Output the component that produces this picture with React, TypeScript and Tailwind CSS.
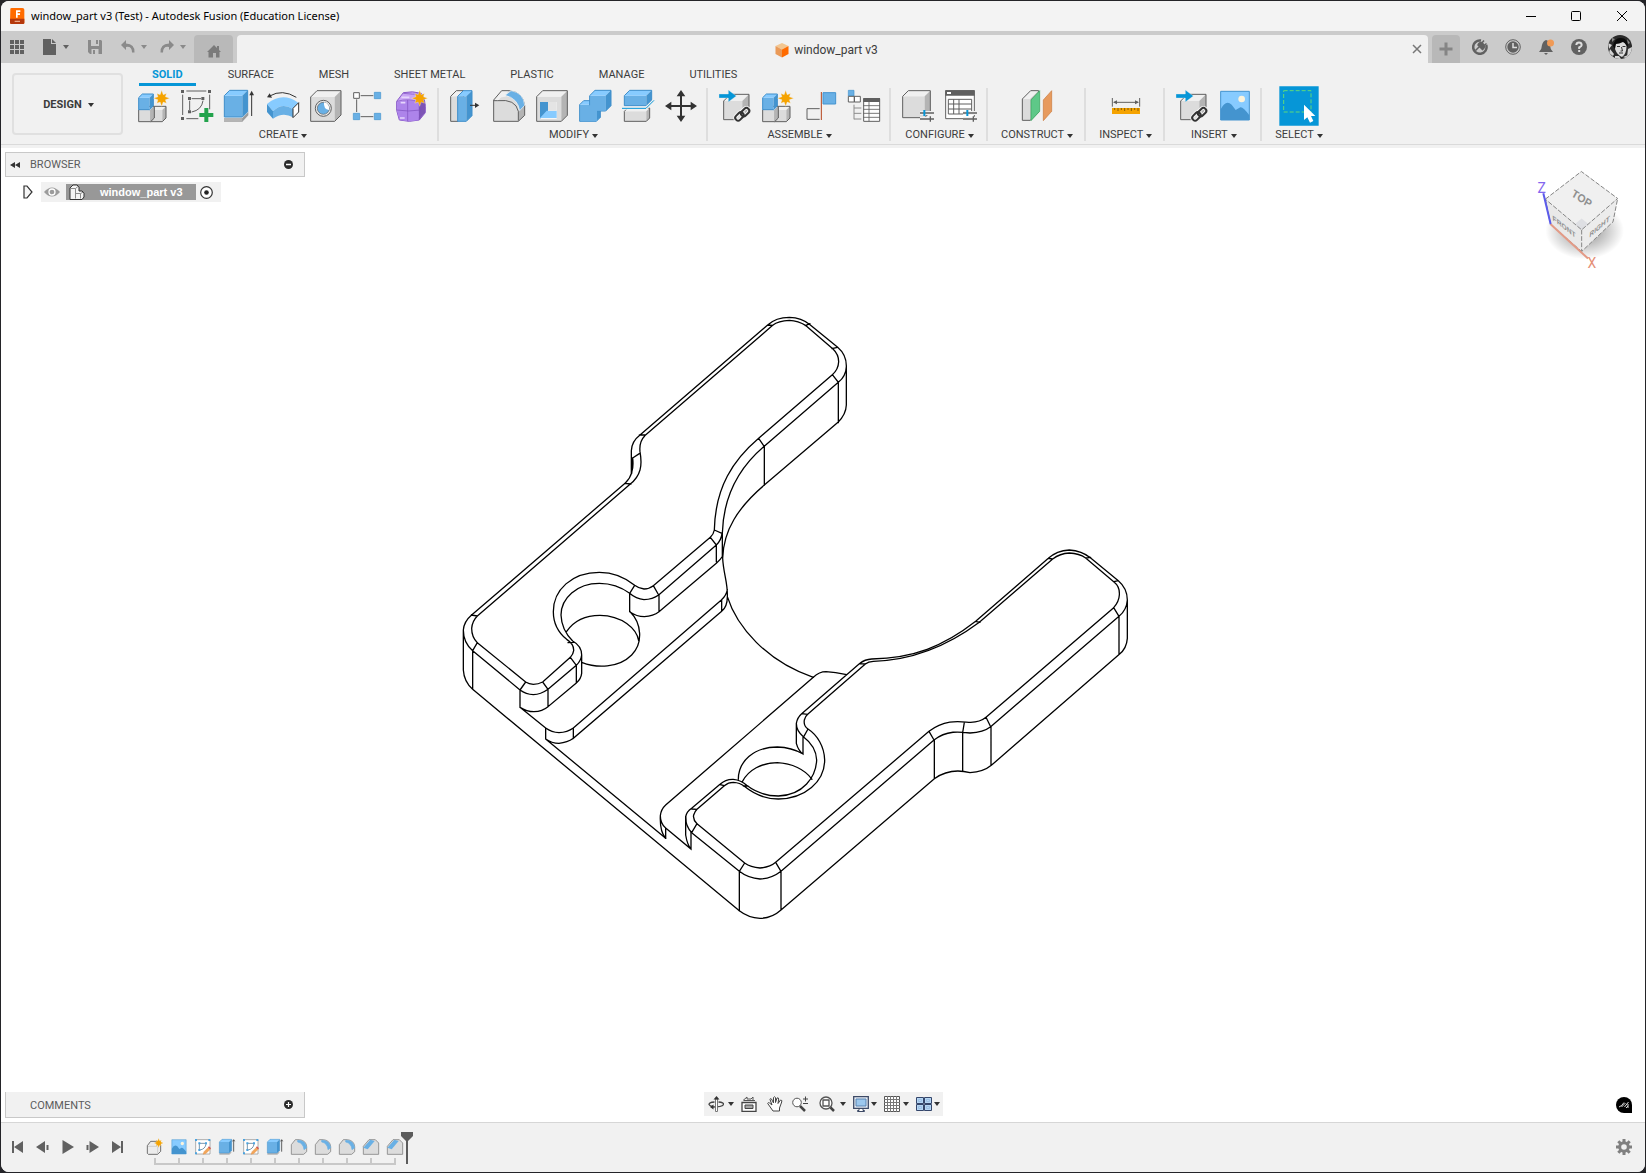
import type { ReactNode } from 'react';

const RIBBON_TABS = ['SOLID', 'SURFACE', 'MESH', 'SHEET METAL', 'PLASTIC', 'MANAGE', 'UTILITIES'];

const GREY = { front: '#dcdcdc', top: '#f0f0f0', side: '#b4b4b4', line: '#5f5f5f' };
const BLUE = { front: '#69b0e5', top: '#87cbff', side: '#4494cf', line: '#3f8fcb' };

// Ribbon artwork is drawn on a 96 unit grid and shown at 32px.
const Art = ({ children, size = 'size-8' }: { children: ReactNode; size?: string }) => (
  <svg viewBox="0 0 96 96" className={`${size} shrink-0 overflow-visible`} fill="none" aria-hidden="true">
    {children}
  </svg>
);

const Box = ({
  x,
  y,
  w,
  h,
  d,
  c = GREY,
}: {
  x: number;
  y: number;
  w: number;
  h: number;
  d: number;
  c?: typeof GREY;
}) => (
  <g stroke={c.line} strokeWidth="3" strokeLinejoin="round">
    <path d={`M${x} ${y + d}h${w}v${h}h${-w}z`} fill={c.front} stroke="none" />
    <path d={`M${x} ${y + d}l${d} ${-d}h${w}l${-d} ${d}z`} fill={c.top} stroke="none" />
    <path d={`M${x + w} ${y + d}l${d} ${-d}v${h}l${-d} ${d}z`} fill={c.side} stroke="none" />
    <path d={`M${x} ${y + d}l${d} ${-d}h${w}v${h}l${-d} ${d}h${-w}z`} />
  </g>
);

const Star = ({ x, y, r = 24 }: { x: number; y: number; r?: number }) => {
  const points = Array.from({ length: 16 }, (_, i) => {
    const radius = i % 2 === 0 ? (i % 4 === 0 ? r : r * 0.85) : r * 0.5;
    const angle = (i * Math.PI) / 8;
    return `${(x + radius * Math.sin(angle)).toFixed(1)},${(y - radius * Math.cos(angle)).toFixed(1)}`;
  }).join(' ');
  return <polygon points={points} fill="#f5a300" stroke="#f1f1f1" strokeWidth="1" />;
};

const ChainLink = () => (
  <g strokeLinecap="round">
    <g stroke="#f1f1f1" strokeWidth="12">
      <rect x="47" y="71" width="28" height="17" rx="8" transform="rotate(-45 61 79)" />
      <rect x="64" y="58" width="28" height="17" rx="8" transform="rotate(-45 78 66)" />
    </g>
    <g stroke="#333" strokeWidth="6">
      <rect x="47" y="71" width="28" height="17" rx="8" transform="rotate(-45 61 79)" />
      <rect x="64" y="58" width="28" height="17" rx="8" transform="rotate(-45 78 66)" />
    </g>
  </g>
);

const Sliders = () => (
  <g>
    <path d="M54 69h42M54 86h42" stroke="#f1f1f1" strokeWidth="12" />
    <path d="M54 69h42M54 87h42" stroke="#5f5f5f" strokeWidth="4" />
    <path d="M67 60v18" stroke="#0696d7" strokeWidth="6" />
    <path d="M85 79v16" stroke="#5f5f5f" strokeWidth="4" />
  </g>
);

const NewComponentArt = () => (
  <Art>
    <Box x={38} y={49} w={35} h={35} d={11} />
    <Box x={2} y={49} w={36} h={35} d={11} />
    <Box x={2} y={12} w={33} h={36} d={11} c={BLUE} />
    <Star x={71} y={25} />
  </Art>
);

const SketchArt = () => (
  <Art>
    <path d="M16 3h60M5 14v61M86 14v44M16 86h36" stroke="#5f5f5f" strokeWidth="3" />
    <path d="M0 0h9v9H0zM81 0h9v9h-9zM0 81h9v9H0zM21 21h9v9h-9zM61 21h9v9h-9zM21 61h9v9h-9z" fill="#5f5f5f" />
    <path d="M32 26h28M26 32v28M66 32Q62 60 32 66" stroke="#5f5f5f" strokeWidth="3" />
    <path d="M76 54v42M55 75h42" stroke="#22a34c" strokeWidth="12" />
  </Art>
);

const ExtrudeArt = () => (
  <Art>
    <path d="M0 84h55l18-18v10L55 95H0z" fill="#9b9b9b" />
    <path d="M0 84h55v11H0z" fill="#b5b5b5" />
    <Box x={1} y={1} w={54} h={64} d={16} c={BLUE} />
    <path d="M83 78V12" stroke="#333" strokeWidth="3" />
    <path d="M83 2l7 14H76z" fill="#333" />
  </Art>
);

const RevolveArt = () => (
  <Art>
    <path d="M0 42Q45 4 94 38L78 58Q46 36 18 64z" fill="#87cbff" />
    <path d="M18 64Q46 36 78 58V82Q48 64 18 86z" fill="#69b0e5" />
    <path d="M0 42L18 64V86L0 66z" fill="#4494cf" />
    <path d="M78 55L95 38V66L78 83z" fill="#fff" stroke="#333" strokeWidth="3" strokeLinejoin="round" />
    <path d="M8 18Q46-4 88 22" stroke="#333" strokeWidth="3" />
    <path d="M0 22l8-12 7 13z" fill="#333" />
  </Art>
);

const HoleArt = () => (
  <Art>
    <Box x={2} y={2} w={72} h={73} d={19} />
    <circle cx="40" cy="55" r="24" fill="#e9e9e9" stroke="#5f5f5f" strokeWidth="3" />
    <circle cx="40" cy="55" r="18" fill="#69b0e5" stroke="#5f5f5f" strokeWidth="2" />
    <path d="M42 37A18 18 0 0 1 57 60Q40 58 42 37z" fill="#fff" />
  </Art>
);

const PatternArt = () => (
  <Art>
    <path d="M23 17h38M11 28v38M23 80h38" stroke="#5f5f5f" strokeWidth="3" />
    <path d="M2 8h17v17H2z" fill="#fff" stroke="#5f5f5f" strokeWidth="3" />
    <path d="M64 7h19v19H64zM64 70h19v19H64zM1 70h19v19H1z" fill="#69b0e5" stroke="#4494cf" strokeWidth="2" />
  </Art>
);

const FormArt = () => (
  <Art>
    <path d="M2 34L22 8Q50 2 76 10Q90 30 88 68L70 90Q40 98 10 90Q-2 60 2 34z" fill="#c9a5f5" stroke="#8a5cc9" strokeWidth="3" />
    <path d="M4 36Q38 26 68 36Q74 62 68 90Q40 96 11 89Q0 62 4 36z" fill="#ad84ea" />
    <path d="M68 36L84 20Q90 45 87 68L69 90z" fill="#7d55b5" />
    <path d="M3 34Q38 24 70 36Q76 62 69 90M35 30V94M2 60Q38 66 73 60L88 44M22 10Q50 14 76 12" stroke="#7b4fbd" strokeWidth="2" />
    <path d="M14 38h14M12 84h14M16 22h24" stroke="#e6d6fb" strokeWidth="5" />
    <Star x={71} y={25} />
  </Art>
);

const PressPullArt = () => (
  <Art>
    <Box x={2} y={2} w={22} h={75} d={17} />
    <Box x={23} y={2} w={26} h={75} d={17} c={BLUE} />
    <path d="M60 46h20" stroke="#333" strokeWidth="3" />
    <path d="M88 46l-13-8v16z" fill="#333" />
  </Art>
);

const FilletArt = () => (
  <Art>
    <path d="M2 30L26 2H48Q90 6 95 46V76L76 94H2z" fill="#dcdcdc" />
    <path d="M76 64L95 46V76L76 94z" fill="#b4b4b4" />
    <path d="M2 30L26 2H46L38 20Q20 20 18 30z" fill="#f0f0f0" />
    <path d="M2 30L26 2H48Q90 6 95 46V76L76 94H2zM2 32H14Q68 26 76 64V92" stroke="#5f5f5f" strokeWidth="3" strokeLinejoin="round" />
    <path d="M36 16L54 2Q92 8 95 46L80 62Q74 24 36 16z" fill="#69b0e5" stroke="#f6f6f6" strokeWidth="2" />
  </Art>
);

const ShellArt = () => (
  <Art>
    <Box x={2} y={2} w={74} h={74} d={18} />
    <path d="M12 36h50v50H12z" fill="#fff" />
    <path d="M12 36h24v30L12 86z" fill="#4494cf" />
    <path d="M12 84l20-22h30v22z" fill="#87cbff" />
    <path d="M36 36h26v26H36z" fill="#e4e4e4" />
  </Art>
);

const CombineArt = () => (
  <Art>
    <Box x={2} y={32} w={50} h={50} d={12} c={BLUE} />
    <Box x={32} y={1} w={48} h={46} d={16} c={BLUE} />
    <path d="M4 46h30v-28h46v44H54v32H4z" fill="#69b0e5" />
  </Art>
);

const SplitArt = () => (
  <Art>
    <Box x={7} y={54} w={66} h={30} d={10} />
    <Box x={7} y={1} w={66} h={30} d={16} c={BLUE} />
    <path d="M0 55h72l24-24" stroke="#f1f1f1" strokeWidth="9" />
    <path d="M0 55h72l24-24" stroke="#0696d7" strokeWidth="3" />
  </Art>
);

const MoveArt = () => (
  <Art>
    <path d="M48 10v76M10 48h76" stroke="#333" strokeWidth="6" />
    <path d="M48 0l13 19H35zM48 96l13-19H35zM0 48l19-13v26zM96 48l-19-13v26z" fill="#333" />
  </Art>
);

const LinkedBoxArt = () => (
  <Art>
    <Box x={14} y={13} w={56} h={56} d={20} />
    <path d="M0 12h28V0l24 18-24 18V24H0z" fill="#0696d7" stroke="#f1f1f1" strokeWidth="1" />
    <ChainLink />
  </Art>
);

const JointArt = () => (
  <Art>
    <path d="M44 56H6v32h38" stroke="#5f5f5f" strokeWidth="3" />
    <path d="M54 8h38v34H54z" fill="#69b0e5" stroke="#4494cf" strokeWidth="3" />
    <path d="M49 6v84" stroke="#b5441c" strokeWidth="3" />
  </Art>
);

const BomArt = () => (
  <Art>
    <path d="M1 1h17v17H1z" fill="#69b0e5" stroke="#4494cf" strokeWidth="2" />
    <path d="M1 19h18v17H1zM19 19h18v17H19z" fill="#fff" stroke="#5f5f5f" strokeWidth="3" />
    <path d="M18 44v44M18 54h22M18 70h22M18 87h22" stroke="#8c8c8c" strokeWidth="3" />
    <path d="M47 26h48v68H47z" fill="#fff" stroke="#5f5f5f" strokeWidth="3" />
    <path d="M46 47h50M46 58h50M46 70h50M46 82h50M63 36v58" stroke="#5f5f5f" strokeWidth="2.5" />
    <path d="M46 24h50v12H46z" fill="#5f5f5f" />
  </Art>
);

const ConfigureArt = () => (
  <Art>
    <Box x={2} y={2} w={66} h={64} d={17} />
    <Sliders />
  </Art>
);

const ConfigTableArt = () => (
  <Art>
    <path d="M2 2h86v84H2z" fill="#fff" stroke="#5f5f5f" strokeWidth="3" />
    <path d="M1 1h88v16H1z" fill="#5f5f5f" />
    <path d="M6 6h12v6H6z" fill="#fff" />
    <path d="M10 28h70v44H10zM10 42h70M10 57h70M26 28v44M42 28v44" stroke="#5f5f5f" strokeWidth="3" />
    <Sliders />
  </Art>
);

const PlaneArt = () => (
  <Art>
    <Box x={4} y={2} w={24} h={64} d={25} />
    <path d="M30 30L56 2V64L30 92z" fill="#5ec888" stroke="#35a85c" strokeWidth="2" />
    <path d="M67 30L92 2V64L67 92z" fill="#e79a5d" stroke="#c9783b" strokeWidth="2" />
  </Art>
);

const MeasureArt = () => (
  <Art>
    <path d="M7 24v26M89 24v26M12 37h72" stroke="#5f5f5f" strokeWidth="3" />
    <path d="M9 37l12-6v12zM87 37l-12-6v12z" fill="#5f5f5f" />
    <path d="M6 54h84v18H6z" fill="#f5a300" />
    <path d="M14 54v6M24 54v9M34 54v6M44 54v9M54 54v6M64 54v9M74 54v6M84 54v9" stroke="#6d4e0b" strokeWidth="2.5" />
  </Art>
);

const CanvasArt = ({ size }: { size?: string }) => (
  <Art size={size}>
    <path d="M5 4h86v86H5z" fill="#87cbff" />
    <path d="M5 58Q20 28 38 44L50 60 64 52Q72 50 91 76V90H5z" fill="#4494cf" />
    <circle cx="68" cy="27" r="10" fill="#fbf3dc" />
    <path d="M5 4h86v86H5z" stroke="#4494cf" strokeWidth="3" />
  </Art>
);

const SelectArt = () => (
  <svg viewBox="0 0 120 120" className="size-10" aria-hidden="true">
    <path d="M1 1h118v118H1z" fill="#0696d7" />
    <path d="M14 14h82v64H14z" fill="none" stroke="#5fd97a" strokeWidth="3" strokeDasharray="12 6" />
    <path d="M75 56v46l10-8 8 16 10-5-7-15h13z" fill="#fff" />
  </svg>
);

const RIBBON_GROUPS: { label: string; tools: [string, () => ReactNode][] }[] = [
  {
    label: 'CREATE',
    tools: [
      ['New Component', NewComponentArt],
      ['Create Sketch', SketchArt],
      ['Extrude', ExtrudeArt],
      ['Revolve', RevolveArt],
      ['Hole', HoleArt],
      ['Rectangular Pattern', PatternArt],
      ['Create Form', FormArt],
    ],
  },
  {
    label: 'MODIFY',
    tools: [
      ['Press Pull', PressPullArt],
      ['Fillet', FilletArt],
      ['Shell', ShellArt],
      ['Combine', CombineArt],
      ['Split Body', SplitArt],
      ['Move', MoveArt],
    ],
  },
  {
    label: 'ASSEMBLE',
    tools: [
      ['Insert Component', LinkedBoxArt],
      ['New Component', NewComponentArt],
      ['Joint', JointArt],
      ['Bill of Materials', BomArt],
    ],
  },
  {
    label: 'CONFIGURE',
    tools: [
      ['Configure', ConfigureArt],
      ['Configuration Table', ConfigTableArt],
    ],
  },
  { label: 'CONSTRUCT', tools: [['Offset Plane', PlaneArt]] },
  { label: 'INSPECT', tools: [['Measure', MeasureArt]] },
  {
    label: 'INSERT',
    tools: [
      ['Insert Derive', LinkedBoxArt],
      ['Canvas', CanvasArt],
    ],
  },
  { label: 'SELECT', tools: [['Select', SelectArt]] },
];

const Caret = ({ className = 'text-[#333]' }: { className?: string }) => (
  <svg viewBox="0 0 6 4" className={`h-1 w-1.5 shrink-0 ${className}`} aria-hidden="true">
    <path d="M0 0h6L3 4z" fill="currentColor" />
  </svg>
);

const Icon = ({ children, className = 'size-4' }: { children: ReactNode; className?: string }) => (
  <svg viewBox="0 0 16 16" className={`${className} shrink-0`} fill="none" aria-hidden="true">
    {children}
  </svg>
);

const TitleBar = () => (
  <header className="flex h-[30px] items-center bg-[#f3f3f3] pl-2">
    <svg viewBox="0 0 48 48" className="size-4" aria-hidden="true">
      <path d="M4 3Q4 0 8 0H40Q46 0 46 5V45Q46 48 42 48H8Q3 48 3 44z" fill="#ff6b00" />
      <path d="M3 32H46V45Q46 48 42 48H8Q3 48 3 44z" fill="#b5380c" />
      <path d="M21 7h13v5h-8v4h7v5h-7v8h-5z" fill="#fff" />
      <path d="M17 38h16v4H17z" fill="#e9a687" />
    </svg>
    <h1 className="ml-1.5 flex-1 truncate font-['Noto_Sans','Open_Sans',sans-serif] text-[11px] text-black">
      window_part v3 (Test) - Autodesk Fusion (Education License)
    </h1>
    <button type="button" aria-label="Minimize" className="grid h-full w-[45px] place-items-center">
      <Icon><path d="M3 8.500h10" stroke="#000" /></Icon>
    </button>
    <button type="button" aria-label="Maximize" className="grid h-full w-[46px] place-items-center">
      <Icon><rect x="3.500" y="3.500" width="9" height="9" rx="1" stroke="#000" /></Icon>
    </button>
    <button type="button" aria-label="Close window" className="grid h-full w-[46px] place-items-center">
      <Icon><path d="M3 3l10 10M13 3L3 13" stroke="#000" /></Icon>
    </button>
  </header>
);

const Avatar = () => (
  <svg viewBox="0 0 24 24" className="size-6" aria-hidden="true">
    <clipPath id="avatar-clip">
      <circle cx="12" cy="12" r="12" />
    </clipPath>
    <g clipPath="url(#avatar-clip)">
      <path d="M0 0h24v24H0z" fill="#2b2b2b" />
      <path d="M7 9Q8 6 12 6Q18 6 18.500 11Q18.500 19 14 22Q9 20 7 14z" fill="#dcdcdc" />
      <path d="M5 11Q7 2 13 3Q20 3 20 12L18 10Q17 8 15 7Q11 9 8 9L7 14z" fill="#0b0b0b" />
      <path d="M9 11.500h3M14.500 11.500h3M11 18h4M13.500 12l1 4h-2" stroke="#333" strokeWidth="1" fill="none" />
      <path d="M0 8l4 2-3 4zM2 14l4 5-1 2-4-3zM20 14l4-2v6l-5 4zM7 21l4 0 2 3-6 0zM15 22l5-2v4z" fill="#d4d4d4" />
      <path d="M4 3l3 1-3 3zM19 4l3 4-2 1z" fill="#8a8a8a" />
    </g>
  </svg>
);

const TabBar = () => (
  <div className="flex h-8 items-end bg-[#cbcbcb] text-[#616161]">
    <div className="flex h-full w-[193px] items-center pl-[9px]">
      <button type="button" aria-label="Data panel">
        <svg viewBox="0 0 14 14" className="h-3.5 w-3.5" fill="currentColor" aria-hidden="true">
          <path d="M0 0h4v4H0zM5 0h4v4H5zM10 0h4v4h-4zM0 5h4v4H0zM5 5h4v4H5zM10 5h4v4h-4zM0 10h4v4H0zM5 10h4v4H5zM10 10h4v4h-4z" />
        </svg>
      </button>
      <button type="button" aria-label="File" className="ml-[18px] flex items-center gap-[5px]">
        <Icon><path d="M1 0h8v5h5v11H1zM10 0l4 4h-4z" fill="currentColor" /></Icon>
        <Caret className="text-[#616161]" />
      </button>
      <button type="button" aria-label="Save" className="ml-[18px] text-[#8a8a8a]">
        <Icon>
          <path d="M1 1h13l1 1v13H3l-2-2z" fill="currentColor" />
          <path d="M4 1h8v6H4zM4.500 10h7v5h-7z" fill="#cbcbcb" />
          <path d="M9 1h2v4H9zM6 11h2v4H6z" fill="currentColor" />
        </Icon>
      </button>
      <button type="button" aria-label="Undo" className="ml-[17px] flex items-center gap-[5px] text-[#8a8a8a]">
        <Icon>
          <path d="M6 1L1 6l5 5V8Q12 7 12 13.500H14.500Q15 5 6 4.500z" fill="currentColor" />
        </Icon>
        <Caret className="text-[#8a8a8a]" />
      </button>
      <button type="button" aria-label="Redo" className="ml-3 flex items-center gap-[5px] text-[#8a8a8a]">
        <Icon>
          <path d="M10 1l5 5-5 5V8Q4 7 4 13.500H1.500Q1 5 10 4.500z" fill="currentColor" />
        </Icon>
        <Caret className="text-[#8a8a8a]" />
      </button>
    </div>
    <button type="button" aria-label="Home" className="grid h-7 w-[39px] place-items-center rounded-t bg-[#b9b9b9] pt-1 text-[#7b7b7b]">
      <Icon>
        <path d="M8 2L1 9h1.500v5.500H7V10h3v4.500h3.500V9H15l-2-2V3h-2v2z" fill="currentColor" />
      </Icon>
    </button>
    <div className="ml-1 flex h-7 flex-1 items-center justify-center rounded-t bg-[#f1f1f1] px-1.5">
      <div className="flex flex-1 items-center justify-center gap-1 pt-px pr-[3px]">
        <Icon>
          <path d="M8 1l6.500 3L8 7.500 1.500 4z" fill="#f3c690" />
          <path d="M1.500 4L8 7.500V15.500l-6.500-3.500z" fill="#ea9a58" />
          <path d="M8 7.500L14.500 4v8L8 15.500z" fill="#ff6b00" />
        </Icon>
        <span className="text-[12px] text-[#3c3c3c]">window_part v3</span>
      </div>
      <button type="button" aria-label="Close document">
        <svg viewBox="0 0 10 10" className="size-2.5" aria-hidden="true">
          <path d="M1 1l8 8M9 1L1 9" stroke="#777" strokeWidth="1.5" />
        </svg>
      </button>
    </div>
    <button type="button" aria-label="New document" className="ml-1 grid h-7 w-7 place-items-center rounded-t bg-[#b8b8b8]">
      <Icon><path d="M8 1.500v13M1.500 8h13" stroke="#858585" strokeWidth="3" /></Icon>
    </button>
    <div className="flex h-full items-center gap-[17px] pr-[13px] pl-3">
      <button type="button" aria-label="Extensions">
        <Icon>
          <path d="M14.200 6A6.700 6.700 0 1 1 9 1.500" stroke="currentColor" strokeWidth="2.500" />
          <path d="M3.500 11.500L7 8M6 6l4.500 4.500Q13 9 12 6L10 3.500Q7 3 6 6zM9 5l3-3.500M11 7.500l3.500-3" stroke="currentColor" strokeWidth="1.500" fill="currentColor" />
        </Icon>
      </button>
      <button type="button" aria-label="Job status">
        <Icon>
          <circle cx="8" cy="8" r="7.300" stroke="currentColor" />
          <circle cx="8" cy="8" r="5.700" fill="currentColor" />
          <path d="M8 4v4.500h4" stroke="#dedede" strokeWidth="1.500" />
        </Icon>
      </button>
      <button type="button" aria-label="Notifications">
        <Icon>
          <path d="M1 13Q4 10 4 6Q5 2 8 1Q12 2 12 6Q12 10 15 13z" fill="currentColor" />
          <path d="M6 14h4l-2 2z" fill="currentColor" />
          <circle cx="12.500" cy="4" r="3.500" fill="#f09a56" />
        </Icon>
      </button>
      <button type="button" aria-label="Help">
        <Icon>
          <circle cx="8" cy="8" r="8" fill="currentColor" />
          <path d="M5.300 6Q5.500 3.500 8 3.500T10.700 6Q10.700 7.300 8.200 8.500V10M8.200 11v2" stroke="#dedede" strokeWidth="2" />
        </Icon>
      </button>
      <button type="button" aria-label="Account" className="ml-1">
        <Avatar />
      </button>
    </div>
  </div>
);

const Ribbon = () => (
  <div className="border-b border-[#dadada] bg-[#f1f1f1] text-[11px] text-[#3c3c3c]">
    <div className="flex">
      <button
        type="button"
        className="mt-[10px] mr-[4px] ml-[11px] flex h-[62px] w-[111px] shrink-0 items-center justify-center gap-1.5 rounded border-2 border-[#e0e0e0] pt-0.5 pl-0.5 font-bold"
      >
        DESIGN <Caret />
      </button>
      <div className="min-w-0">
        <nav className="ml-3 flex h-[23px] gap-[19px]" aria-label="Toolbar tabs">
          {RIBBON_TABS.map((tab, i) => (
            <button
              key={tab}
              type="button"
              className={
                i === 0
                  ? 'border-b-3 border-[#0696d7] px-[13px] pt-1 font-bold whitespace-nowrap text-[#0696d7]'
                  : 'border-b-3 border-transparent px-[13px] pt-1 whitespace-nowrap'
              }
            >
              {tab}
            </button>
          ))}
        </nav>
        <div className="mt-0.5 mb-[3px] flex">
          {RIBBON_GROUPS.map((group) => (
            <section
              key={group.label}
              className="flex h-[53px] flex-col items-center border-r-2 border-[#dedede] pr-[9px] pl-[11px] last:border-r-0"
            >
              <div className="flex h-9 shrink-0 items-center gap-[11px]">
                {group.tools.map(([name, Tool]) => (
                  <button key={name} type="button" aria-label={name}>
                    <Tool />
                  </button>
                ))}
              </div>
              <button type="button" className="mt-[3px] flex h-4 shrink-0 items-center gap-[3px] px-0.5 pt-px">
                {group.label} <Caret />
              </button>
            </section>
          ))}
        </div>
      </div>
    </div>
  </div>
);

const LEFT_ARM = [
  'M570 405Q545 424 544 452V520M584 408Q567 425 570 455Q576 490 570 510Q563 535 540 553',
  'M548 474Q551 500 545 518Q541 534 526 549M546 474Q549 500 545 520',
  'M568 405H585M548 474L568 461M524 550L543 552M64 946L526 549M82 948L540 553M64 945L82 948',
  'M570 405L953 75M584 407L968 76M953 75L968 76',
  'M953 75Q978 52 1018 52Q1055 53 1080 74L1163 142Q1190 165 1189 200V315Q1188 343 1164 367L942 556',
  'M968 76Q985 62 1018 61Q1045 62 1068 77L1149 147Q1166 163 1166 185Q1165 208 1147 224L926 415',
  'M1066 77L1080 71M1146 146L1162 142M1147 224L1165 247V368M926 415L943 440V556',
  'M1189 200Q1188 228 1165 247L941 440C865 505 820 590 817 700V770',
  'M926 415C850 480 796 560 793 690Q791 702 781 712',
  'M942 556C865 622 820 690 818 775C820 820 834 850 832 890C860 980 950 1085 1090 1132',
  'M793 690L816 700Q814 720 799 735V785M781 712L799 735M818 768Q813 777 799 790',
  'M781 712L610 857Q597 867 582 867Q567 866 554 856C525 832 490 817 448 817C365 817 310 870 310 935C310 975 328 1000 350 1018Q372 1032 371 1052Q370 1062 361 1072L278 1146Q265 1153 250 1153Q237 1152 227 1146L82 1028Q65 1012 65 985Q67 963 82 948',
  'M799 735L626 885Q608 898 582 899Q558 897 539 880C515 862 485 850 448 850C380 850 333 895 333 945C334 975 345 1000 368 1023Q395 1038 395 1065Q393 1082 379 1096L294 1168Q272 1184 250 1184Q228 1183 210 1170L68 1052Q40 1028 40 990Q42 965 64 946',
  'M554 856L539 880M610 857L626 885M361 1072L379 1096M278 1146L294 1168M227 1146L210 1170M82 1028L68 1052M354 1028L372 1027',
  'M539 880V935Q560 950 583 950Q610 948 627 935V885M627 935L799 790',
  'M395 1065V1120Q393 1137 379 1149V1096M379 1149L294 1220V1168M210 1170V1222Q230 1235 252 1235Q277 1234 294 1220',
  'M350 994C370 965 405 946 450 946C515 947 560 985 566 1022M541 936C575 970 580 1030 545 1065C505 1105 440 1105 395 1087',
  'M210 1222L287 1284Q305 1297 327 1298Q352 1297 370 1284L814 900Q830 885 832 868',
  'M832 890Q832 920 815 934V900M815 934L370 1315V1284M287 1284V1317Q305 1330 327 1330Q352 1328 370 1315',
  'M40 990V1110Q42 1145 68 1168V1052M68 1168L868 1832M287 1317L647 1615',
];

const BASE_SLOT = [
  'M647 1615V1584Q631 1570 631 1547Q633 1528 647 1515L1090 1132M631 1547Q629 1595 647 1615',
  'M647 1584L723 1647V1596M707 1550V1605Q712 1635 723 1647',
];

const RIGHT_ARM = [
  'M35 908Q16 888 17 860Q20 845 35 835L120 763Q137 747 160 748Q183 750 200 766C225 785 260 798 295 798C370 796 408 740 410 690C409 660 390 635 370 620Q349 603 349 580Q352 562 365 551L538 401Q555 388 575 387C700 384 790 350 887 274L1105 85Q1130 62 1168 60Q1205 62 1232 84L1315 152Q1342 175 1342 210V325Q1340 355 1318 373',
  'M51 881Q38 868 41 855Q44 845 51 838L133 767Q145 757 160 757Q180 758 193 769C225 795 260 807 295 807C375 806 434 755 434 690C433 650 412 615 384 597Q370 588 373 570Q375 560 383 553L556 402Q565 395 580 394C700 391 800 350 898 277L1118 87Q1140 70 1168 69Q1198 70 1217 84L1302 156Q1320 170 1318 195Q1317 215 1301 233L918 562Q900 577 872 577C850 577 800 563 747 604L287 997Q270 1012 240 1014Q212 1012 194 999L51 881',
  'M1342 210Q1340 240 1317 259L932 590Q910 607 870 609C840 605 800 600 762 630L303 1024Q275 1046 240 1047Q205 1045 178 1024L35 908',
  'M1317 259V373M933 590V706M848 608V724M763 630V746M303 1024V1140M178 1024V1142',
  'M1318 373L934 706Q910 726 870 728C840 720 800 720 763 746L303 1140Q275 1165 240 1165Q205 1163 178 1142',
  'M1301 233L1317 259M918 562L932 590M853 577L848 608M747 604L762 630M287 997L303 1024M194 999L178 1024M51 881L35 908M35 837L51 838M120 764L133 767M190 768L204 768',
  'M384 597L370 622M365 551L383 553M538 401L556 402M887 274L900 277M1105 85L1118 87M1217 84L1232 82M1302 155L1315 152',
  'M349 580V640Q355 662 369 672V622M175 748C175 695 220 651 292 651Q335 652 369 672M187 755C205 720 245 698 292 698C335 700 375 718 396 748',
  'M400 442Q418 425 438 425Q465 427 500 434',
];

const PartDrawing = () => (
  <svg
    viewBox="30 45 2010 1815"
    className="absolute top-[167px] left-[459px] h-[605px] w-[670px]"
    role="img"
    aria-label="window_part model"
    fill="none"
    stroke="#000"
    strokeWidth="3.900"
    strokeLinecap="round"
  >
    <path d={LEFT_ARM.join('')} />
    <path d={BASE_SLOT.join('')} />
    <path d={RIGHT_ARM.join('')} transform="translate(690 690)" />
  </svg>
);

const ViewCube = () => (
  <svg viewBox="600 500 300 320" className="absolute top-[19px] right-[15px] h-[107px] w-[100px]" role="img" aria-label="View cube">
    <defs>
      <radialGradient id="cube-shadow">
        <stop offset="0.4" stopColor="#000" stopOpacity="0.28" />
        <stop offset="1" stopColor="#000" stopOpacity="0" />
      </radialGradient>
    </defs>
    <ellipse cx="764" cy="690" rx="118" ry="86" fill="url(#cube-shadow)" />
    <path d="M754 513L863 594 849 664 755 753 662 672 646 596z" fill="#f0f0f0" />
    <path d="M646 596L755 688V753L662 672z" fill="#e9e9e9" />
    <path d="M755 688L863 594 849 664 755 753z" fill="#ececec" />
    <path d="M755 654L776 671 755 688 734 671z" fill="#dedfe3" />
    <g fill="none" stroke="#858585" strokeWidth="3" strokeDasharray="14 5">
      <path d="M646 596L754 513 863 594 755 688z" />
      <path d="M755 688V753L849 664 863 594M646 596L662 672 755 753" />
    </g>
    <g fill="#8f8f8f" fontFamily="Liberation Sans, Arial, sans-serif" fontWeight="bold" textAnchor="middle">
      <text fontSize="34" transform="matrix(0.8 0.52 -0.45 0.85 750 604)">TOP</text>
      <text fontSize="25" transform="matrix(0.8 0.62 0.08 0.9 703 686)">FRONT</text>
      <text fontSize="25" transform="matrix(0.78 -0.66 -0.08 0.9 808 686)">RIGHT</text>
    </g>
    <path d="M640 578L662 671" stroke="#5b5bea" strokeWidth="6" />
    <path d="M662 671L774 774" stroke="#e39a86" strokeWidth="6" />
    <g fontFamily="Roboto, sans-serif" fontSize="42" textAnchor="middle">
      <text x="635" y="577" fill="#8467ef">Z</text>
      <text x="786" y="801" fill="#e58f76">X</text>
    </g>
  </svg>
);

const BrowserPanel = () => (
  <aside className="pt-1 pl-1">
    <div className="flex h-[25px] w-[300px] items-center border border-[#c8c8c8] bg-[#f1f1f1] pr-[11px] pl-1 text-[11px] text-[#5c5c5c]">
      <button type="button" aria-label="Collapse browser">
        <svg viewBox="0 0 10 6" className="h-1.5 w-2.5" aria-hidden="true">
          <path d="M5 0v6L0 3zM10 0v6L5 3z" fill="#333" />
        </svg>
      </button>
      <h2 className="ml-[10px] flex-1 pt-0.5">BROWSER</h2>
      <button type="button" aria-label="Hide browser">
        <svg viewBox="0 0 9 9" className="size-[9px]" aria-hidden="true">
          <circle cx="4.500" cy="4.500" r="4.500" fill="#2b2b2b" />
          <path d="M2 4.500h5" stroke="#fff" strokeWidth="1.500" />
        </svg>
      </button>
    </div>
    <div className="mt-[5px] flex h-5 items-center pl-[18px]">
      <button type="button" aria-label="Expand">
        <svg viewBox="0 0 10 14" className="h-3.5 w-2.5" aria-hidden="true">
          <path d="M1 1l3 0 5 6-5 6H1z" fill="#f6f6f6" stroke="#333" strokeWidth="1.2" />
        </svg>
      </button>
      <div className="ml-2 flex h-5 items-center bg-[#f1f1f1] pr-2 pl-[3px]">
        <button type="button" aria-label="Toggle visibility">
          <Icon>
            <path d="M0 8Q8-1 16 8Q8 17 0 8z" fill="#9c9c9c" />
            <circle cx="8" cy="8" r="3" fill="#9c9c9c" stroke="#fff" strokeWidth="1.300" />
          </Icon>
        </button>
        <button
          type="button"
          className="ml-1.5 flex h-4 w-[130px] items-center bg-[#989898] pl-[3px] font-['Liberation_Sans',Arial,sans-serif] text-[11px] font-bold text-white"
        >
          <Icon>
            <path d="M1 4l3-3h4l2 2v4h3l2 2v4l-2 2.500H1z" fill="#f4f4f4" stroke="#333" />
            <path d="M1 4.500h5.500v10M6.500 9.500h5v5M6.500 4.500L9.500 2M11.500 9.500L14.500 8" stroke="#8c8c8c" />
          </Icon>
          <span className="ml-[15px]">window_part v3</span>
        </button>
        <label className="ml-1 flex">
          <input type="radio" name="active-component" defaultChecked className="peer sr-only" aria-label="Activate component" />
          <svg viewBox="0 0 13 13" className="size-[13px]" aria-hidden="true">
            <circle cx="6.500" cy="6.500" r="5.800" fill="#fff" stroke="#333" strokeWidth="1.200" />
            <circle cx="6.500" cy="6.500" r="2.300" fill="#222" />
          </svg>
        </label>
      </div>
    </div>
  </aside>
);

const NAV_TOOLS: { name: string; layout: string; caret: boolean; art: ReactNode }[] = [
  {
    name: 'Orbit',
    layout: 'gap-1',
    caret: true,
    art: (
      <>
        <path d="M6.500 6Q1 6.300 1 8.500Q2 10 4 10.500M10.500 6Q16 6.500 15.500 8.500Q14 11 4 11" stroke="#444" strokeWidth="1.300" />
        <path d="M7.500 3h2v12.500h-2z" fill="#fff" stroke="#777" />
        <path d="M5.500 3.500L8.500 0l3 3.500zM5.500 8.500L2 11l3.500 2.500z" fill="#333" />
      </>
    ),
  },
  {
    name: 'Look at',
    layout: 'pr-[3px]',
    caret: false,
    art: (
      <>
        <path d="M1 6.500h14v9H1z" fill="#fff" stroke="#444" strokeWidth="1.300" />
        <path d="M4 9h8v3.500H4z" fill="#a5a5a5" stroke="#444" />
        <path d="M2 4.500L6 1v2h4l2-2v3M3 4.500h11" stroke="#555" />
      </>
    ),
  },
  {
    name: 'Pan',
    layout: 'pr-[2px]',
    caret: false,
    art: (
      <path
        d="M6 15L2.500 10 0.700 7.500Q1 6 2.500 7L5 9 3 3.500Q3 2 4.500 3L6.500 7V1.500Q7.500 0 8.500 1.500V6.500L10 2Q11.500 1.300 11.700 3L11 7.500 13.500 4Q15.500 4 14.700 6L12.500 12V15z"
        fill="#fff"
        stroke="#444"
      />
    ),
  },
  {
    name: 'Zoom',
    layout: 'pr-[4px]',
    caret: false,
    art: (
      <>
        <circle cx="5" cy="6.500" r="4.300" fill="#fff" stroke="#555" />
        <path d="M8 10l5 5" stroke="#444" strokeWidth="2.500" />
        <path d="M11 3h5M13.500 0.500v5M11 7.500h5" stroke="#444" />
      </>
    ),
  },
  {
    name: 'Fit',
    layout: 'gap-[5px]',
    caret: true,
    art: (
      <>
        <circle cx="7" cy="7" r="6" fill="#fff" stroke="#555" strokeWidth="1.300" />
        <path d="M4 4h6v6H4z" fill="#fff" stroke="#555" strokeWidth="1.300" />
        <path d="M11.500 11.500l3.500 3.500" stroke="#444" strokeWidth="2.500" />
      </>
    ),
  },
  {
    name: 'Display settings',
    layout: 'gap-0.5',
    caret: true,
    art: (
      <>
        <path d="M0.700 0.700h14.600v11.600H0.700z" fill="#e6edf6" stroke="#3d4a66" strokeWidth="1.300" />
        <path d="M3 3h10v7H3z" fill="#9cc8ee" stroke="#5b83b0" />
        <path d="M6 12.500h4v2h1.500v1h-7v-1H6z" fill="#fff" stroke="#3d4a66" />
      </>
    ),
  },
  {
    name: 'Grid and snaps',
    layout: 'gap-[3px]',
    caret: true,
    art: (
      <>
        <path d="M0.500 0.500h15v15h-15z" fill="#fff" stroke="#555" />
        <path d="M3.500 0v16M6.500 0v16M9.500 0v16M12.500 0v16M0 3.500h16M0 6.500h16M0 9.500h16M0 12.500h16" stroke="#777" />
      </>
    ),
  },
  {
    name: 'Viewports',
    layout: 'gap-0.5',
    caret: true,
    art: (
      <>
        <path d="M0.500 1.500h7v6h-7zM8.500 1.500h7v6h-7zM0.500 8.500h7v6h-7zM8.500 8.500h7v6h-7z" fill="#b5d5f3" stroke="#34466b" />
        <path d="M2.500 3.500h3v2h-3zM10.500 3.500h3v2h-3zM2.500 10.500h3v2h-3zM10.500 10.500h3v2h-3z" stroke="#9bbfe4" />
      </>
    ),
  },
];

const CanvasFooter = () => (
  <div className="grid grid-cols-[1fr_auto_1fr] items-center px-1 pb-1">
    <div className="flex h-[26px] w-[300px] items-center border border-t-0 border-[#c8c8c8] bg-[#f1f1f1] pr-[11px] pl-6 text-[11px] text-[#5c5c5c]">
      <h2 className="flex-1 pt-[3px]">COMMENTS</h2>
      <button type="button" aria-label="Add comment">
        <svg viewBox="0 0 9 9" className="size-[9px]" aria-hidden="true">
          <circle cx="4.500" cy="4.500" r="4.500" fill="#2b2b2b" />
          <path d="M2 4.500h5M4.500 2v5" stroke="#fff" strokeWidth="1.200" />
        </svg>
      </button>
    </div>
    <div className="mb-0.5 flex h-6 items-center gap-[7px] bg-[#f1f1f1] pr-[3px] pl-1" role="toolbar" aria-label="Navigation">
      {NAV_TOOLS.map((tool) => (
        <button key={tool.name} type="button" aria-label={tool.name} className={`flex items-center ${tool.layout}`}>
          <Icon>{tool.art}</Icon>
          {tool.caret && <Caret />}
        </button>
      ))}
    </div>
    <button type="button" aria-label="Assistant" className="mr-[9px] justify-self-end">
      <Icon>
        <path d="M8 0a8 8 0 0 1 8 8v8H8A8 8 0 0 1 8 0z" fill="#000" />
        <path d="M3 10Q6 9 8 5.500M5.500 10l4-4M8.500 10L12.500 5M12 7v4M10 11l2-2" stroke="#ddd" />
      </Icon>
    </button>
  </div>
);

const TimelineSketch = () => (
  <Art size="size-4">
    <path d="M4 4h86v86H4z" fill="#fff" stroke="#8a8a8a" strokeWidth="4" />
    <path d="M26 26h40M26 26v40M66 30Q62 60 30 66" stroke="#5f7f9a" strokeWidth="5" />
    <path d="M0 0h12v12H0zM80 0h12v12H80zM0 80h12v12H0zM20 20h12v12H20zM60 20h12v12H60zM20 60h12v12H20z" fill="#4aa3df" />
    <path d="M48 92l6-16 26-26 12 12-28 26z" fill="#f2a65a" stroke="#e08a3c" strokeWidth="2" />
    <path d="M78 50l6-6 12 12-6 6z" fill="#d4504c" />
  </Art>
);

const TimelineFillet = () => (
  <Art size="size-4">
    <path d="M2 34L26 4H50Q90 8 94 46V76L76 92H2z" fill="#dcdcdc" stroke="#858585" strokeWidth="5" />
    <path d="M40 8Q86 6 94 52L78 64Q74 24 40 18z" fill="#69b0e5" stroke="#69b0e5" strokeWidth="4" />
  </Art>
);

const TimelineChamfer = () => (
  <Art size="size-4">
    <path d="M2 44L36 4H74L94 24V92H2z" fill="#dcdcdc" stroke="#858585" strokeWidth="5" />
    <path d="M2 52L44 4 70 12 28 62z" fill="#69b0e5" />
  </Art>
);

const TimelineComponent = () => (
  <Art size="size-4">
    <path d="M2 40L22 14H60L82 40V74L64 92H8L2 86z" fill="#ececec" stroke="#555" strokeWidth="5" />
    <path d="M64 46V90M6 44H62" stroke="#c9c9c9" strokeWidth="5" />
    <Star x={70} y={24} r={28} />
  </Art>
);

const TimelineImage = () => <CanvasArt size="size-4" />;

const TimelineExtrude = () => (
  <Art size="size-4">
    <path d="M2 84h58l14-12v10L62 95H2z" fill="#b5b5b5" />
    <Box x={2} y={2} w={58} h={66} d={16} c={BLUE} />
    <path d="M88 76V6M82 14l6-10 6 10" stroke="#444" strokeWidth="5" />
  </Art>
);

const TIMELINE: [string, () => ReactNode][] = [
  ['New Component', TimelineComponent],
  ['Canvas1', TimelineImage],
  ['Sketch1', TimelineSketch],
  ['Extrude1', TimelineExtrude],
  ['Sketch2', TimelineSketch],
  ['Extrude2', TimelineExtrude],
  ['Fillet1', TimelineFillet],
  ['Fillet2', TimelineFillet],
  ['Fillet3', TimelineFillet],
  ['Chamfer1', TimelineChamfer],
  ['Chamfer2', TimelineChamfer],
];

const PLAYBACK: [string, string][] = [
  ['Go to start', 'M2 2h2v12H2zM13 2v12L4 8z'],
  ['Step back', 'M10 2v12L1 8zM11.500 6h2v5h-2z'],
  ['Play', 'M2.500 1l11.500 7-11.500 7z'],
  ['Step forward', 'M1.500 6h2v5h-2zM4.500 2v12L14 8z'],
  ['Go to end', 'M2 2v12l9-6zM11 2h2v12h-2z'],
];

const Timeline = () => (
  <footer className="flex h-[50px] items-start border-t border-[#d6d6d6] bg-[#f1f1f1] pr-[13px] pl-[9px] text-[#616161]">
    <div className="mt-4 flex items-center gap-[9px]">
      {PLAYBACK.map(([name, path]) => (
        <button key={name} type="button" aria-label={name}>
          <Icon>
            <path d={path} fill="currentColor" />
          </Icon>
        </button>
      ))}
    </div>
    <ol className="mt-4 ml-[17px] flex">
      {TIMELINE.map(([name, Feature], i) => (
        <li key={name} className="flex w-6 flex-col items-center">
          <button type="button" aria-label={name}>
            <Feature />
          </button>
          <div className="mt-[3px] flex h-[7px] w-full">
            <div className={i > 0 ? 'w-[13px] border-r-2 border-b-2 border-[#c8c8c8]' : 'w-[13px] border-r-2 border-[#c8c8c8]'} />
            <div className={i < TIMELINE.length - 1 ? 'w-[11px] border-b-2 border-[#c8c8c8]' : 'w-[11px]'} />
          </div>
        </li>
      ))}
    </ol>
    <svg viewBox="0 0 12 32" className="mt-[9px] -ml-1.5 h-8 w-3" aria-hidden="true">
      <path d="M0 0h12v4L7 9v23H5V9L0 4z" fill="#5c5c5c" />
    </svg>
    <button type="button" aria-label="Timeline settings" className="mt-4 ml-auto">
      <Icon>
        <circle cx="8" cy="8" r="4.300" stroke="#808080" strokeWidth="3" />
        <path d="M8 0v4M8 12v4M0 8h4M12 8h4M2.300 2.300l3 3M10.700 10.700l3 3M13.700 2.300l-3 3M5.300 10.700l-3 3" stroke="#808080" strokeWidth="3" />
      </Icon>
    </button>
  </footer>
);

export default function App() {
  return (
    <div className="flex h-screen min-h-[600px] flex-col bg-[#242428] p-px font-['Roboto','Liberation_Sans',sans-serif]">
      <div className="flex flex-1 flex-col overflow-hidden rounded-lg bg-white">
        <TitleBar />
        <TabBar />
        <Ribbon />
        <div className="h-[3px] bg-[#f1f1f1]" />
        <main className="relative flex flex-1 flex-col justify-between">
          <PartDrawing />
          <BrowserPanel />
          <ViewCube />
          <CanvasFooter />
        </main>
        <Timeline />
      </div>
    </div>
  );
}
